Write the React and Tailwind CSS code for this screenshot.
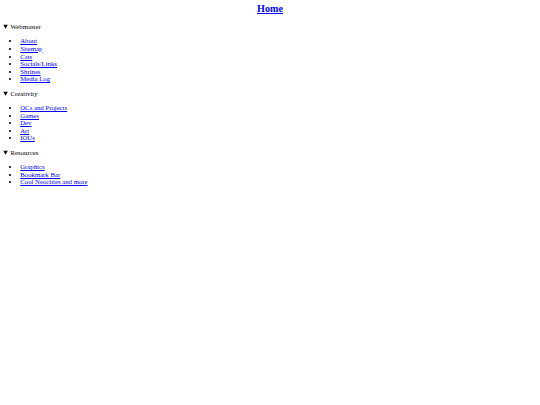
const sections = [
  {
    title: "Webmaster",
    links: ["About", "Sitemap", "Cats", "Socials/Links", "Shrines", "Media Log"],
  },
  {
    title: "Creativity",
    links: ["OCs and Projects", "Games", "Dev", "Art", "IOUs"],
  },
  {
    title: "Resources",
    links: ["Graphics", "Bookmark Bar", "Cool Neocities and more"],
  },
];

export default function App() {
  return (
    <div className="min-h-[405px] bg-white px-[3.375px] pt-[3.375px] text-[6.75px] leading-[7.59px] text-black font-['Liberation_Serif',_'Times_New_Roman',_serif]">
      <h2 className="mb-[7.8px] text-center text-[10.125px] leading-[11.8px] font-bold">
        <a href="#" className="text-[#0000ee] underline">
          Home
        </a>
      </h2>

      {sections.map((section) => (
        <details key={section.title} open>
          <summary className="cursor-pointer">{section.title}</summary>
          <ul className="my-[6.75px] list-disc pl-[16.875px]">
            {section.links.map((link) => (
              <li key={link}>
                <a href="#" className="text-[#0000ee] underline">
                  {link}
                </a>
              </li>
            ))}
          </ul>
        </details>
      ))}
    </div>
  );
}
